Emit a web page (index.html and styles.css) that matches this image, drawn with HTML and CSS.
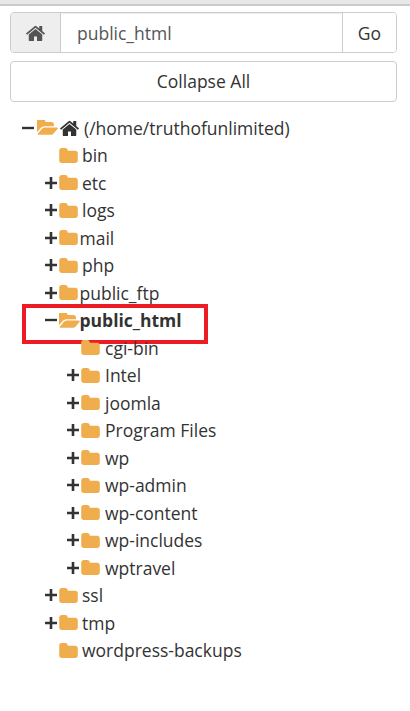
FILE: index.html
```html
<!DOCTYPE html>
<html lang="en">
<head>
<meta charset="utf-8">
<title>File tree</title>
<link rel="stylesheet" href="styles.css">
</head>
<body>
<svg class="defs" aria-hidden="true">
  <symbol id="i-home" viewBox="0 192 1792 1344"><path d="M1472 992v480q0 26-19 45t-45 19h-384v-384H768v384H384q-26 0-45-19t-19-45V992q0-1 .5-3t.5-3l575-474 575 474q1 2 1 6zm223-69l-62 74q-8 9-21 11h-3q-13 0-21-7L896 424l-692 577q-12 8-24 7-13-2-21-11l-62-74q-8-10-7-23.500t11-21.500l719-599q32-26 76-26t76 26l244 204V288q0-14 9-23t23-9h192q14 0 23 9t9 23v408l219 182q10 8 11 21.500t-7 23.500z"/></symbol>
  <symbol id="i-folder" viewBox="64 192 1664 1344"><path d="M1728 608v704q0 92-66 158t-158 66H288q-92 0-158-66t-66-158V416q0-92 66-158t158-66h320q92 0 158 66t66 158v32h672q92 0 158 66t66 158z"/></symbol>
  <symbol id="i-open" viewBox="0 192 1845 1344"><path d="M1845 931q0 35-35 75l-336 396q-43 51-120.500 86.500t-143.500 35.500h-1088q-34 0-60.500-13t-26.500-43q0-35 35-75l336-396q43-51 120.500-86.500t143.500-35.500h1088q34 0 60.500 13t26.500 43zm-343-344v160h-832q-94 0-197 47.500t-164 119.500l-337 396-5 6q0-4-.5-12.500t-.5-12.500v-960q0-92 66-158t158-66h320q92 0 158 66t66 158v32h544q92 0 158 66t66 158z"/></symbol>
  <symbol id="i-plus" viewBox="0 0 12 12"><path d="M4.700 0h2.600v4.700H12v2.600H7.300V12H4.700V7.300H0V4.700h4.700z"/></symbol>
  <symbol id="i-minus" viewBox="0 0 12 12"><path d="M0 4.800h12v2.400H0z"/></symbol>
</svg>
<div class="topbar"></div>
<main class="panel">
  <form class="path-bar">
    <button class="home-btn" type="button" aria-label="Home"><svg class="home-btn-icon"><use href="#i-home"/></svg></button>
    <div class="path-field">public_html</div>
    <button class="go-btn" type="button">Go</button>
  </form>
  <button class="collapse-btn" type="button">Collapse All</button>
  <ul class="tree">
    <li class="row root"><svg class="toggle"><use href="#i-minus"/></svg><svg class="open"><use href="#i-open"/></svg><svg class="root-home"><use href="#i-home"/></svg><span class="label">(/home/truthofunlimited)</span></li>
    <li class="row depth1"><span class="toggle"></span><svg class="folder"><use href="#i-folder"/></svg><span class="label">bin</span></li>
    <li class="row depth1"><svg class="toggle"><use href="#i-plus"/></svg><svg class="folder"><use href="#i-folder"/></svg><span class="label">etc</span></li>
    <li class="row depth1"><svg class="toggle"><use href="#i-plus"/></svg><svg class="folder"><use href="#i-folder"/></svg><span class="label">logs</span></li>
    <li class="row depth1"><svg class="toggle"><use href="#i-plus"/></svg><svg class="folder"><use href="#i-folder"/></svg><span class="label tight">mail</span></li>
    <li class="row depth1"><svg class="toggle"><use href="#i-plus"/></svg><svg class="folder"><use href="#i-folder"/></svg><span class="label">php</span></li>
    <li class="row depth1"><svg class="toggle"><use href="#i-plus"/></svg><svg class="folder"><use href="#i-folder"/></svg><span class="label tight">public_ftp</span></li>
    <li class="row depth1 current"><svg class="toggle"><use href="#i-minus"/></svg><svg class="folder-open"><use href="#i-open"/></svg><span class="label tight strong">public_html</span><span class="highlight"></span></li>
    <li class="row depth2"><span class="toggle"></span><svg class="folder"><use href="#i-folder"/></svg><span class="label">cgi-bin</span></li>
    <li class="row depth2"><svg class="toggle"><use href="#i-plus"/></svg><svg class="folder"><use href="#i-folder"/></svg><span class="label">Intel</span></li>
    <li class="row depth2"><svg class="toggle"><use href="#i-plus"/></svg><svg class="folder"><use href="#i-folder"/></svg><span class="label">joomla</span></li>
    <li class="row depth2"><svg class="toggle"><use href="#i-plus"/></svg><svg class="folder"><use href="#i-folder"/></svg><span class="label">Program Files</span></li>
    <li class="row depth2"><svg class="toggle"><use href="#i-plus"/></svg><svg class="folder"><use href="#i-folder"/></svg><span class="label">wp</span></li>
    <li class="row depth2"><svg class="toggle"><use href="#i-plus"/></svg><svg class="folder"><use href="#i-folder"/></svg><span class="label">wp-admin</span></li>
    <li class="row depth2"><svg class="toggle"><use href="#i-plus"/></svg><svg class="folder"><use href="#i-folder"/></svg><span class="label">wp-content</span></li>
    <li class="row depth2"><svg class="toggle"><use href="#i-plus"/></svg><svg class="folder"><use href="#i-folder"/></svg><span class="label">wp-includes</span></li>
    <li class="row depth2"><svg class="toggle"><use href="#i-plus"/></svg><svg class="folder"><use href="#i-folder"/></svg><span class="label">wptravel</span></li>
    <li class="row depth1"><svg class="toggle"><use href="#i-plus"/></svg><svg class="folder"><use href="#i-folder"/></svg><span class="label">ssl</span></li>
    <li class="row depth1"><svg class="toggle"><use href="#i-plus"/></svg><svg class="folder"><use href="#i-folder"/></svg><span class="label">tmp</span></li>
    <li class="row depth1"><span class="toggle"></span><svg class="folder"><use href="#i-folder"/></svg><span class="label">wordpress-backups</span></li>
  </ul>
</main>
</body>
</html>
```
FILE: styles.css
```css
* { box-sizing: border-box; }
html, body { margin: 0; padding: 0; background: #fff; }
body {
  font-family: "Open Sans", "Liberation Sans", sans-serif;
  font-size: 17.5px;
  color: #333;
  height: 711px;
  overflow: hidden;
}
.defs { display: none; }
.topbar {
  height: 6px;
  background: #e8e8e8;
  border-bottom: 2px solid #ccc;
}
.panel { padding: 6px 13px 0 10px; }
.path-bar {
  display: flex;
  height: 41px;
  margin: 0;
  border: 1px solid #ccc;
  border-radius: 4px;
  overflow: hidden;
}
.home-btn {
  flex: 0 0 50px;
  padding: 0;
  display: flex;
  align-items: center;
  justify-content: center;
  background: #eee;
  border: 0;
  border-right: 1px solid #ccc;
}
.home-btn-icon { width: 21px; height: 16px; fill: #555; }
.path-field {
  flex: 1;
  display: flex;
  align-items: center;
  padding-left: 16px;
  color: #555;
  box-shadow: inset 0 1px 1px rgba(0, 0, 0, .075);
}
.go-btn {
  flex: 0 0 54px;
  padding: 0;
  background: #fff;
  border: 0;
  border-left: 1px solid #ccc;
  font: inherit;
  color: #333;
}
.collapse-btn {
  display: block;
  width: 100%;
  height: 41px;
  margin-top: 8px;
  padding: 0 0 2px;
  background: #fff;
  border: 1px solid #ccc;
  border-radius: 4px;
  font: inherit;
  color: #333;
}
.tree { list-style: none; margin: 12px 0 0; padding: 0; }
.row {
  position: relative;
  display: flex;
  align-items: center;
  height: 27.5px;
  white-space: nowrap;
}
.root { padding-left: 12px; }
.depth1 { padding-left: 35px; }
.depth2 { padding-left: 57px; }
.toggle { flex: 0 0 12px; width: 12px; height: 12px; fill: #333; margin-right: 2px; }
.open { flex: none; width: 21px; height: 15px; fill: #f0ad4e; margin-left: 1px; }
.root-home { flex: none; width: 21px; height: 16px; fill: #333; margin-left: 1px; }
.root .label { margin-left: 4px; }
.folder { flex: none; width: 19px; height: 15px; fill: #f0ad4e; }
.folder-open { flex: none; width: 21px; height: 15px; fill: #f0ad4e; }
.label { margin-left: 5px; }
.depth1 .label { margin-left: 4px; }
.depth1 .label.tight { margin-left: 1.500px; }
.depth1 .folder-open + .label.tight { margin-left: -0.500px; }
.strong { font-weight: 700; }
.highlight {
  position: absolute;
  left: 12px;
  top: -3px;
  width: 186px;
  height: 40px;
  border: 4px solid #ed1c24;
}
```
